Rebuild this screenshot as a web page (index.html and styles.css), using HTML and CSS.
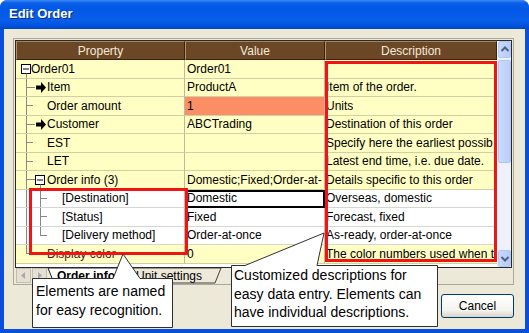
FILE: index.html
```html
<!DOCTYPE html>
<html lang="en">
<head>
    <meta charset="UTF-8">
    <title>Edit Order</title>
    <link rel="stylesheet" href="styles.css">
</head>
<body>
    <div class="window">
        <div class="titlebar">Edit Order</div>
        <div class="client">
            <div class="frame">
                <div class="grid-box">
                    <div class="cols">
                        <div class="head">
                            <div class="hc">Property</div>
                            <div class="hc">Value</div>
                            <div class="hc">Description</div>
                        </div>
                        <div class="rows">
                            <div class="row">
                                <div class="cell prop">
                                    <svg class="tree w15"><rect x="5.5" y="5.5" width="9" height="9" fill="#fff" stroke="#000"/><line x1="7" y1="10" x2="13" y2="10" stroke="#000"/><line x1="10.5" y1="14.5" x2="10.5" y2="19" stroke="#888"/></svg>
                                    <span>Order01</span>
                                </div>
                                <div class="cell val">Order01</div>
                                <div class="cell desc"></div>
                            </div>
                            <div class="row">
                                <div class="cell prop">
                                    <svg class="tree w31"><line x1="10.5" y1="0" x2="10.5" y2="19" stroke="#888"/><line x1="10" y1="9.5" x2="19" y2="9.5" stroke="#888"/><polygon points="20,7.5 25,7.5 25,4 30,9.5 25,15 25,11.5 20,11.5" fill="#000"/></svg>
                                    <span>Item</span>
                                </div>
                                <div class="cell val">ProductA</div>
                                <div class="cell desc">Item of the order.</div>
                            </div>
                            <div class="row">
                                <div class="cell prop">
                                    <svg class="tree w31"><line x1="10.5" y1="0" x2="10.5" y2="19" stroke="#888"/><line x1="10" y1="9.5" x2="17" y2="9.5" stroke="#888"/></svg>
                                    <span>Order amount</span>
                                </div>
                                <div class="cell val hot">1</div>
                                <div class="cell desc">Units</div>
                            </div>
                            <div class="row">
                                <div class="cell prop">
                                    <svg class="tree w31"><line x1="10.5" y1="0" x2="10.5" y2="19" stroke="#888"/><line x1="10" y1="9.5" x2="19" y2="9.5" stroke="#888"/><polygon points="20,7.5 25,7.5 25,4 30,9.5 25,15 25,11.5 20,11.5" fill="#000"/></svg>
                                    <span>Customer</span>
                                </div>
                                <div class="cell val">ABCTrading</div>
                                <div class="cell desc">Destination of this order</div>
                            </div>
                            <div class="row">
                                <div class="cell prop">
                                    <svg class="tree w31"><line x1="10.5" y1="0" x2="10.5" y2="19" stroke="#888"/><line x1="10" y1="9.5" x2="17" y2="9.5" stroke="#888"/></svg>
                                    <span>EST</span>
                                </div>
                                <div class="cell val"></div>
                                <div class="cell desc">Specify here the earliest possib</div>
                            </div>
                            <div class="row">
                                <div class="cell prop">
                                    <svg class="tree w31"><line x1="10.5" y1="0" x2="10.5" y2="19" stroke="#888"/><line x1="10" y1="9.5" x2="17" y2="9.5" stroke="#888"/></svg>
                                    <span>LET</span>
                                </div>
                                <div class="cell val"></div>
                                <div class="cell desc">Latest end time, i.e. due date.</div>
                            </div>
                            <div class="row">
                                <div class="cell prop">
                                    <svg class="tree w31"><line x1="10.5" y1="0" x2="10.5" y2="19" stroke="#888"/><line x1="10" y1="9.5" x2="19" y2="9.5" stroke="#888"/><rect x="19.5" y="5.5" width="9" height="9" fill="#fff" stroke="#000"/><line x1="21" y1="10" x2="27" y2="10" stroke="#000"/><line x1="24.5" y1="14.5" x2="24.5" y2="19" stroke="#888"/></svg>
                                    <span>Order info (3)</span>
                                </div>
                                <div class="cell val">Domestic;Fixed;Order-at-</div>
                                <div class="cell desc">Details specific to this order</div>
                            </div>
                            <div class="row white">
                                <div class="cell prop">
                                    <svg class="tree w46"><line x1="10.5" y1="0" x2="10.5" y2="19" stroke="#888"/><line x1="24.5" y1="0" x2="24.5" y2="19" stroke="#888"/><line x1="24" y1="9.5" x2="31" y2="9.5" stroke="#888"/></svg>
                                    <span>[Destination]</span>
                                </div>
                                <div class="cell val selected">Domestic</div>
                                <div class="cell desc">Overseas, domestic</div>
                            </div>
                            <div class="row white">
                                <div class="cell prop">
                                    <svg class="tree w46"><line x1="10.5" y1="0" x2="10.5" y2="19" stroke="#888"/><line x1="24.5" y1="0" x2="24.5" y2="19" stroke="#888"/><line x1="24" y1="9.5" x2="31" y2="9.5" stroke="#888"/></svg>
                                    <span>[Status]</span>
                                </div>
                                <div class="cell val">Fixed</div>
                                <div class="cell desc">Forecast, fixed</div>
                            </div>
                            <div class="row white">
                                <div class="cell prop">
                                    <svg class="tree w46"><line x1="10.5" y1="0" x2="10.5" y2="19" stroke="#888"/><line x1="24.5" y1="0" x2="24.5" y2="10" stroke="#888"/><line x1="24" y1="9.5" x2="31" y2="9.5" stroke="#888"/></svg>
                                    <span>[Delivery method]</span>
                                </div>
                                <div class="cell val">Order-at-once</div>
                                <div class="cell desc">As-ready, order-at-once</div>
                            </div>
                            <div class="row">
                                <div class="cell prop">
                                    <svg class="tree w31"><line x1="10.5" y1="0" x2="10.5" y2="10" stroke="#888"/><line x1="10" y1="9.5" x2="17" y2="9.5" stroke="#888"/></svg>
                                    <span class="dim">Display color</span>
                                </div>
                                <div class="cell val">0</div>
                                <div class="cell desc">The color numbers used when t</div>
                            </div>
                        </div>
                    </div>
                    <div class="vscroll">
                        <div class="sbtn"><svg width="14" height="17"><polyline points="3.5,10 7,6.5 10.5,10" fill="none" stroke="#4d6185" stroke-width="2"/></svg></div>
                        <div class="track"><div class="thumb"></div></div>
                        <div class="sbtn"><svg width="14" height="17"><polyline points="3.5,7 7,10.5 10.5,7" fill="none" stroke="#4d6185" stroke-width="2"/></svg></div>
                    </div>
                </div>
                <div class="tabstrip">
                    <div class="tscroll">
                        <svg width="15" height="15"><polygon points="9,4 5,7.5 9,11" fill="#a8a8a8"/></svg>
                    </div>
                    <div class="tscroll">
                        <svg width="15" height="15"><polygon points="6,4 10,7.5 6,11" fill="#a8a8a8"/></svg>
                    </div>
                    <svg class="tabs" width="465" height="16">
                        <polygon points="80,0 86,15 168,15 174,0" fill="#ece9d8" stroke="#404040"/>
                        <text x="89" y="12" class="tab-text">Unit settings</text>
                        <polygon points="1,0 7,15 80,15 86,0" fill="#fff" stroke="#202020"/>
                        <text x="10" y="12" class="tab-text active">Order info</text>
                    </svg>
                </div>
            </div>
            <div class="buttons">
                <button class="btn">Cancel</button>
            </div>
        </div>

        <div class="mark mark-desc"></div>
        <div class="mark mark-names"></div>

        <svg class="callouts" width="529" height="333">
            <path d="M32.5,278.5 L113,278.5 L123,254 L140,278.5 L172.5,278.5 L172.5,327.5 L32.5,327.5 Z" fill="#fff" stroke="#303030"/>
            <path d="M231.5,265.5 L245,265.5 L324,233 L317,265.5 L437.5,265.5 L437.5,326.5 L231.5,326.5 Z" fill="#fff" stroke="#303030"/>
        </svg>
        <div class="note note-names">Elements are named<br>for easy recognition.</div>
        <div class="note note-desc">Customized descriptions for<br>easy data entry. Elements can<br>have individual descriptions.</div>
    </div>
</body>
</html>
```

FILE: styles.css
```css
* {
    box-sizing: border-box;
}
html, body {
    margin: 0;
}
body {
    width: 529px;
    height: 333px;
    overflow: hidden;
    font-family: "Liberation Sans", Arial, sans-serif;
    font-size: 12px;
    color: #000;
}
.window {
    position: relative;
    width: 529px;
    height: 333px;
    padding: 0 4px 4px;
    background: #0a4fdc;
    border-radius: 8px 8px 0 0;
}
.titlebar {
    height: 29px;
    margin: 0 -4px;
    padding: 0 0 2px 9px;
    display: flex;
    align-items: center;
    border-radius: 7px 7px 0 0;
    background: linear-gradient(#3d8af7 0, #0a5fe8 3px, #0058e6 9px, #0a5ee9 20px, #0052dc 26px, #0046c4 29px);
    color: #fff;
    font-weight: bold;
    font-size: 13px;
    text-shadow: 1px 1px 0 #0a2a7a;
}
.client {
    height: 300px;
    background: #ece9d8;
    padding: 9px 11px 0 9px;
}
.frame {
    width: 501px;
    height: 247px;
    border: 1px solid #aca899;
    padding: 1px 1px 0;
}
.grid-box {
    display: flex;
    height: 228px;
    border: 1px solid #2a2a2a;
    background: #fff;
}
.cols {
    width: 481px;
}
.head {
    display: grid;
    grid-template-columns: 169px 140px 172px;
    height: 19px;
    background: #6c4726;
}
.hc {
    display: flex;
    align-items: center;
    justify-content: center;
    color: #f4ead8;
    border-top: 1px solid #a58462;
    border-left: 1px solid #b2926e;
    border-right: 1px solid #3a220c;
    border-bottom: 1px solid #3a220c;
}
.rows {
    height: 207px;
    overflow: hidden;
}
.row {
    display: grid;
    grid-template-columns: 169px 140px 172px;
    height: 18.5px;
    background: #ffffc4;
}
.row.white {
    background: #fff;
}
.cell {
    display: flex;
    align-items: center;
    white-space: nowrap;
    overflow: hidden;
    border-bottom: 1px solid #d2cea6;
}
.row.white .cell {
    border-bottom-color: #d6d6d0;
}
.prop, .val {
    border-right: 1px solid #bdb9a2;
}
.val {
    padding-left: 2px;
}
.desc {
    padding-left: 1px;
}
.hot {
    background: #fc8e66;
}
.selected {
    outline: 2px solid #000;
    outline-offset: -2px;
}
.dim {
    color: #4a2020;
}
.tree {
    display: block;
    height: 19px;
    flex: none;
}
.w15 { width: 15px; }
.w31 { width: 31px; }
.w46 { width: 46px; }

.vscroll {
    width: 14px;
    display: flex;
    flex-direction: column;
    background: #eef0fb;
    border-left: 1px solid #f4f6ff;
}
.sbtn {
    height: 17px;
    background: linear-gradient(90deg, #c8d8fd, #b6cbf9);
    border: 1px solid #b4c8f6;
    border-radius: 2px;
}
.sbtn svg {
    display: block;
    margin: -1px 0 0 -1px;
}
.track {
    flex: 1;
    padding-top: 2px;
}
.thumb {
    height: 103px;
    background: linear-gradient(90deg, #cbdafd, #bbcefb);
    border: 1px solid #b0c6f5;
    border-radius: 2px;
}

.tabstrip {
    display: flex;
    height: 16px;
    background: #ece9d8;
}
.tscroll {
    width: 15px;
    height: 15px;
    margin-left: 1px;
    background: #e4e1d4;
    border: 1px solid #c2bfb0;
}
.tscroll svg {
    display: block;
    margin: -1px;
}
.tabs {
    display: block;
}
.tab-text {
    font-family: "Liberation Sans", Arial, sans-serif;
    font-size: 12px;
}
.tab-text.active {
    font-weight: bold;
}

.buttons {
    display: flex;
    justify-content: flex-end;
    margin-top: 9px;
}
.btn {
    width: 73px;
    height: 24px;
    border: 1px solid #003c74;
    border-radius: 3px;
    background: linear-gradient(#ffffff, #f4f3ee 70%, #d8d4c8);
    font-family: "Liberation Sans", Arial, sans-serif;
    font-size: 12px;
    color: #000;
}

.mark {
    position: absolute;
    border: 3px solid #f01414;
}
.mark-desc {
    left: 325px;
    top: 61px;
    width: 172px;
    height: 201px;
}
.mark-names {
    left: 29px;
    top: 188px;
    width: 159px;
    height: 67px;
}
.callouts {
    position: absolute;
    left: 0;
    top: 0;
}
.note {
    position: absolute;
    font-size: 14px;
    line-height: 18.5px;
    white-space: nowrap;
}
.note-names {
    left: 36px;
    top: 282px;
}
.note-desc {
    left: 234px;
    top: 266px;
}
```
